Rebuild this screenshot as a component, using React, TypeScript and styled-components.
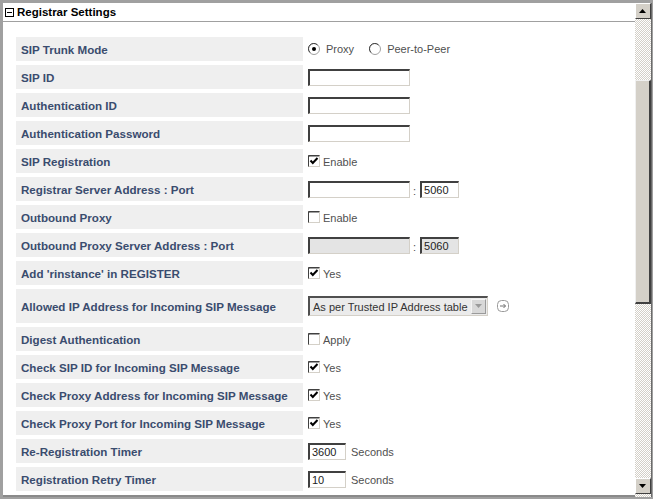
import React from "react";
import styled, { createGlobalStyle } from "styled-components";

const GlobalStyle = createGlobalStyle`
  html, body {
    margin: 0;
    padding: 0;
    background: #a0a0a0;
    font-family: "Liberation Sans", Arial, sans-serif;
  }
`;

const Frame = styled.div`
  width: 653px;
  height: 499px;
  box-sizing: border-box;
  padding: 3px 1px 2px 3px;
  background: #a0a0a0;
  display: flex;
`;

const Panel = styled.div`
  flex: 1;
  background: #fff;
  display: flex;
  overflow: hidden;
`;

const Content = styled.div`
  flex: 1;
  display: flex;
  flex-direction: column;
  border-bottom: 2px solid #8a8a8a;
`;

const Header = styled.div`
  height: 18px;
  display: flex;
  align-items: center;
  gap: 3px;
  padding-left: 2px;
  border-bottom: 1px solid #a0a0a0;
  font-size: 11.5px;
  font-weight: bold;
  color: #000;
`;

const Collapse = styled.span`
  width: 7px;
  height: 7px;
  border: 1px solid #000;
  position: relative;
  margin-top: 1px;
  &::after {
    content: "";
    position: absolute;
    left: 1px;
    top: 3px;
    width: 5px;
    height: 1px;
    background: #000;
  }
`;

const Table = styled.div`
  display: grid;
  grid-template-columns: 287px 1fr;
  column-gap: 1px;
  row-gap: 4px;
  padding: 15px 4px 0 13px;
`;

const Label = styled.div<{ $tall?: boolean }>`
  height: ${(p) => (p.$tall ? 34 : 24)}px;
  background: #efefef;
  display: flex;
  align-items: center;
  padding-left: 5px;
  font-size: 11.6px;
  font-weight: bold;
  color: #3a4c6e;
  white-space: nowrap;
`;

const Value = styled.div`
  display: flex;
  align-items: center;
  padding-left: 4px;
  font-size: 11px;
  color: #505050;
`;

const TextBox = styled.div<{ $w: number; $disabled?: boolean }>`
  width: ${(p) => p.$w}px;
  height: 17px;
  box-sizing: border-box;
  border-top: 2px solid #404040;
  border-left: 2px solid #404040;
  border-right: 1px solid #d4d0c8;
  border-bottom: 1px solid #d4d0c8;
  background: ${(p) => (p.$disabled ? "#e4e4e4" : "#fff")};
  font-size: 11px;
  color: #222;
  padding-left: 2px;
  line-height: 14px;
`;

const Colon = styled.span`
  margin: 0 4px 0 3px;
  padding-top: 3px;
`;

const Opt = styled.span`
  display: inline-flex;
  align-items: center;
  gap: 3px;
  margin-right: 15px;
`;

const CheckText = styled.span`
  margin-left: 3px;
  padding-top: 2px;
`;

const Unit = styled.span`
  margin-left: 5px;
  padding-top: 2px;
`;

const Select = styled.div`
  width: 180px;
  height: 20px;
  box-sizing: border-box;
  border-top: 2px solid #505050;
  border-left: 2px solid #505050;
  border-right: 1px solid #d4d0c8;
  border-bottom: 1px solid #d4d0c8;
  background: #ebebeb;
  display: flex;
  align-items: center;
  justify-content: space-between;
  padding-left: 3px;
  font-size: 11px;
  color: #333;
`;

const SelectBtn = styled.span`
  width: 15px;
  height: 15px;
  box-sizing: border-box;
  margin-right: 1px;
  background: #d8d8d8;
  border: 1px solid #f4f4f4;
  border-right-color: #9a9a9a;
  border-bottom-color: #9a9a9a;
  display: flex;
  align-items: center;
  justify-content: center;
`;

const GoIcon = styled.span`
  margin-left: 9px;
  display: inline-flex;
`;

const ScrollBar = styled.div`
  width: 16px;
  display: flex;
  flex-direction: column;
  background-color: #fff;
  background-image: repeating-conic-gradient(#d4d0c8 0 25%, #fff 0 50%);
  background-size: 2px 2px;
  border-right: 1px solid #6a6a6a;
`;

const ArrowBtn = styled.div`
  height: 16px;
  box-sizing: border-box;
  background: #d4d0c8;
  border: 1px solid #fff;
  border-right-color: #404040;
  border-bottom-color: #404040;
  display: flex;
  align-items: center;
  justify-content: center;
`;

const Track = styled.div<{ $h: number }>`
  height: ${(p) => p.$h}px;
`;

const Thumb = styled.div`
  height: 224px;
  box-sizing: border-box;
  background: #d4d0c8;
  border: 1px solid #f0f0f0;
  border-right: 2px solid #404040;
  border-bottom: 2px solid #404040;
`;

function Radio({ on }: { on?: boolean }) {
  return (
    <svg width="12" height="12" viewBox="0 0 12 12">
      <circle cx="6" cy="6" r="5.5" fill="#fff" stroke="#a0a0a0" />
      <path d="M2 9.5A5 5 0 0 1 9.5 2" fill="none" stroke="#404040" strokeWidth="1" />
      {on && <circle cx="6" cy="6" r="2" fill="#000" />}
    </svg>
  );
}

function Check({ on }: { on?: boolean }) {
  return (
    <svg width="12" height="12" viewBox="0 0 12 12">
      <rect x="0.5" y="0.5" width="11" height="11" fill="#fff" stroke="#d4d0c8" />
      <path d="M0.5 11.5V0.5H11.5" fill="none" stroke="#404040" />
      <path d="M1 1.5V1H11" fill="none" stroke="#404040" />
      {on && <path d="M2.5 5.5L4.8 8L9.5 3" fill="none" stroke="#000" strokeWidth="2" />}
    </svg>
  );
}

function Tri({ down, color = "#000" }: { down?: boolean; color?: string }) {
  return (
    <svg width="8" height="5" viewBox="0 0 8 5">
      <path d={down ? "M0 0H7L3.5 4Z" : "M3.5 0L7 4H0Z"} fill={color} />
    </svg>
  );
}

type Row = { label: string; tall?: boolean; value: React.ReactNode };

const yes = (text: string, on?: boolean) => (
  <>
    <Check on={on} />
    <CheckText>{text}</CheckText>
  </>
);

const rows: Row[] = [
  {
    label: "SIP Trunk Mode",
    value: (
      <>
        <Opt>
          <Radio on />
          <span style={{ marginLeft: 3 }}>Proxy</span>
        </Opt>
        <Opt>
          <Radio />
          <span style={{ marginLeft: 3 }}>Peer-to-Peer</span>
        </Opt>
      </>
    ),
  },
  { label: "SIP ID", value: <TextBox $w={102} /> },
  { label: "Authentication ID", value: <TextBox $w={102} /> },
  { label: "Authentication Password", value: <TextBox $w={102} /> },
  { label: "SIP Registration", value: yes("Enable", true) },
  {
    label: "Registrar Server Address : Port",
    value: (
      <>
        <TextBox $w={102} />
        <Colon>:</Colon>
        <TextBox $w={39}>5060</TextBox>
      </>
    ),
  },
  { label: "Outbound Proxy", value: yes("Enable") },
  {
    label: "Outbound Proxy Server Address : Port",
    value: (
      <>
        <TextBox $w={102} $disabled />
        <Colon>:</Colon>
        <TextBox $w={39} $disabled>
          5060
        </TextBox>
      </>
    ),
  },
  { label: "Add 'rinstance' in REGISTER", value: yes("Yes", true) },
  {
    label: "Allowed IP Address for Incoming SIP Message",
    tall: true,
    value: (
      <>
        <Select>
          As per Trusted IP Address table
          <SelectBtn>
            <Tri down color="#9a9a9a" />
          </SelectBtn>
        </Select>
        <GoIcon>
          <svg width="12" height="12" viewBox="0 0 12 12">
            <rect x="0.5" y="0.5" width="11" height="11" rx="4" fill="#fff" stroke="#9a9a9a" />
            <path d="M3 6H8.5M6.5 4L8.5 6L6.5 8" fill="none" stroke="#707070" />
          </svg>
        </GoIcon>
      </>
    ),
  },
  { label: "Digest Authentication", value: yes("Apply") },
  { label: "Check SIP ID for Incoming SIP Message", value: yes("Yes", true) },
  { label: "Check Proxy Address for Incoming SIP Message", value: yes("Yes", true) },
  { label: "Check Proxy Port for Incoming SIP Message", value: yes("Yes", true) },
  {
    label: "Re-Registration Timer",
    value: (
      <>
        <TextBox $w={38}>3600</TextBox>
        <Unit>Seconds</Unit>
      </>
    ),
  },
  {
    label: "Registration Retry Timer",
    value: (
      <>
        <TextBox $w={38}>10</TextBox>
        <Unit>Seconds</Unit>
      </>
    ),
  },
];

export default function App() {
  return (
    <>
      <GlobalStyle />
      <Frame>
        <Panel>
          <Content>
            <Header>
              <Collapse />
              Registrar Settings
            </Header>
            <Table>
              {rows.map((r) => (
                <React.Fragment key={r.label}>
                  <Label $tall={r.tall}>{r.label}</Label>
                  <Value>{r.value}</Value>
                </React.Fragment>
              ))}
            </Table>
          </Content>
          <ScrollBar>
            <ArrowBtn>
              <Tri />
            </ArrowBtn>
            <Track $h={61} />
            <Thumb />
            <Track $h={174} />
            <ArrowBtn>
              <Tri down />
            </ArrowBtn>
          </ScrollBar>
        </Panel>
      </Frame>
    </>
  );
}
